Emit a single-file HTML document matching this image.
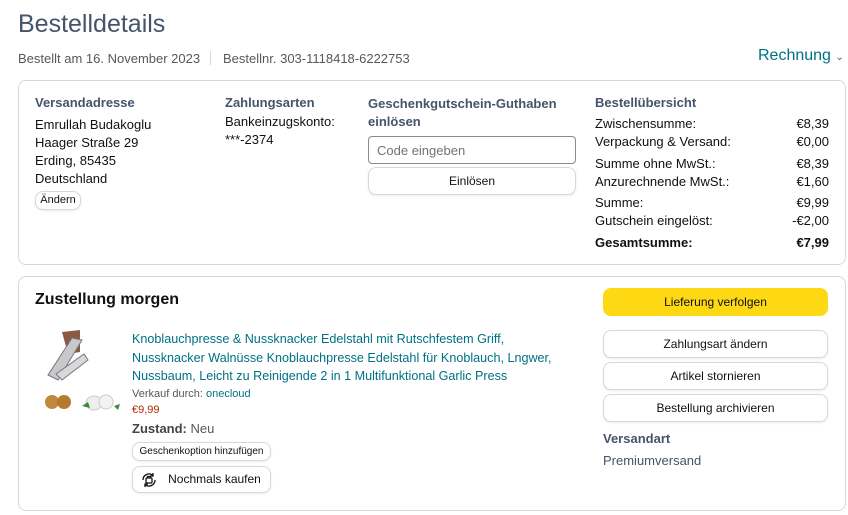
<!DOCTYPE html>
<html><head><meta charset="utf-8"><style>
*{box-sizing:border-box;margin:0;padding:0}
body{width:848px;height:515px;background:#fff;font-family:"Liberation Sans",sans-serif;color:#0f1111;font-size:13px;position:relative;overflow:hidden}
.a{position:absolute;white-space:nowrap}
.h{color:#44546a;font-weight:bold}
.box{position:absolute;border:1px solid #d5d9d9;border-radius:8px}
.btn{position:absolute;border:1px solid #d5d9d9;border-radius:8px;background:#fff;text-align:center;box-shadow:0 1px 2px rgba(213,217,217,.5)}
.row{position:absolute;left:595px;width:234px;display:flex;justify-content:space-between;font-size:13px}
.link{color:#007185}
</style></head><body>
<div class="a" style="left:18px;top:10px;font-size:25px;color:#44546a">Bestelldetails</div>
<div class="a" style="left:18px;top:51px;font-size:13px;color:#565959">Bestellt am 16. November 2023</div>
<div class="a" style="left:210px;top:51px;width:1px;height:14px;background:#d5d9d9"></div>
<div class="a" style="left:223px;top:51px;font-size:13px;color:#565959">Bestellnr. 303-1118418-6222753</div>
<div class="a" style="left:758px;top:47px;font-size:16px;color:#007185">Rechnung <span style="font-size:10px;color:#565959">&#8964;</span></div>

<div class="box" style="left:18px;top:80px;width:828px;height:185px"></div>
<div class="a h" style="left:35px;top:95px">Versandadresse</div>
<div class="a" style="left:35px;top:116px;line-height:18px">Emrullah Budakoglu<br>Haager Straße 29<br>Erding, 85435<br>Deutschland</div>
<div class="btn" style="left:35px;top:191px;width:46px;height:19px;font-size:11px;line-height:17px">Ändern</div>
<div class="a h" style="left:225px;top:95px">Zahlungsarten</div>
<div class="a" style="left:225px;top:113px;line-height:18px">Bankeinzugskonto:<br>***-2374</div>
<div class="a h" style="left:368px;top:95px;line-height:18px">Geschenkgutschein-Guthaben<br>einlösen</div>
<div class="a" style="left:368px;top:136px;width:208px;height:28px;border:1px solid #888c8c;border-radius:4px;padding:6px 8px;color:#6f7373">Code eingeben</div>
<div class="btn" style="left:368px;top:167px;width:208px;height:28px;line-height:26px;font-size:12px">Einlösen</div>
<div class="a h" style="left:595px;top:95px">Bestellübersicht</div>
<div class="row" style="top:116px"><span>Zwischensumme:</span><span>€8,39</span></div>
<div class="row" style="top:134px"><span>Verpackung &amp; Versand:</span><span>€0,00</span></div>
<div class="row" style="top:156px"><span>Summe ohne MwSt.:</span><span>€8,39</span></div>
<div class="row" style="top:174px"><span>Anzurechnende MwSt.:</span><span>€1,60</span></div>
<div class="row" style="top:195px"><span>Summe:</span><span>€9,99</span></div>
<div class="row" style="top:213px"><span>Gutschein eingelöst:</span><span>-€2,00</span></div>
<div class="row" style="top:235px;font-weight:bold"><span>Gesamtsumme:</span><span>€7,99</span></div>

<div class="box" style="left:18px;top:276px;width:828px;height:235px"></div>
<div class="a" style="left:35px;top:291px;font-size:16px;font-weight:bold">Zustellung morgen</div>
<div class="a" style="left:42px;top:330px;width:80px;height:82px">
<svg width="80" height="82" viewBox="0 0 80 82">
<path d="M20 2 L38 0 L38 22 L26 24 Z" fill="#8a5a45"/>
<path d="M6 45 L30 8 L40 10 L16 50 Z" fill="#c8c8cc" stroke="#777" stroke-width="1"/>
<path d="M14 44 L42 24 L46 30 L20 50 Z" fill="#d8d8dc" stroke="#777" stroke-width="1"/>
<circle cx="10" cy="72" r="7" fill="#c08a3e"/><circle cx="22" cy="72" r="7" fill="#b57a30"/>
<ellipse cx="52" cy="73" rx="8" ry="7" fill="#eee" stroke="#ccc"/><ellipse cx="64" cy="72" rx="7" ry="7" fill="#f2f2f2" stroke="#ccc"/>
<path d="M40 76 l6 -4 l2 6 z M72 76 l6 -2 l-2 6z" fill="#3a8a3a"/>
</svg></div>
<div class="a link" style="left:132px;top:330px;line-height:18.5px;font-size:12.6px">Knoblauchpresse &amp; Nussknacker Edelstahl mit Rutschfestem Griff,<br>Nussknacker Walnüsse Knoblauchpresse Edelstahl für Knoblauch, Lngwer,<br>Nussbaum, Leicht zu Reinigende 2 in 1 Multifunktional Garlic Press</div>
<div class="a" style="left:132px;top:388px;font-size:11px;color:#565959">Verkauf durch: <span class="link">onecloud</span></div>
<div class="a" style="left:132px;top:404px;font-size:11px;color:#b12704">€9,99</div>
<div class="a" style="left:132px;top:421px;color:#565959"><b style="color:#444">Zustand:</b> Neu</div>
<div class="btn" style="left:132px;top:442px;width:139px;height:19px;font-size:10px;line-height:17px">Geschenkoption hinzufügen</div>
<div class="btn" style="left:132px;top:466px;width:139px;height:27px;line-height:25px;font-size:12px;padding-left:26px">Nochmals kaufen
<svg style="position:absolute;left:7px;top:4px" width="18" height="18" viewBox="0 0 18 18" fill="none" stroke="#0f1111" stroke-width="1.3"><path d="M3 9a6 6 0 0 1 10-4.5M15 9a6 6 0 0 1-10 4.5"/><path d="M13 2v3h-3M5 16v-3h3"/><rect x="6" y="7" width="6" height="5" rx="1"/><path d="M7.5 7V5.5h3V7"/></svg></div>

<div class="a" style="left:603px;top:288px;width:225px;height:28px;background:#ffd814;border-radius:8px;text-align:center;line-height:28px;font-size:12px">Lieferung verfolgen</div>
<div class="btn" style="left:603px;top:330px;width:225px;height:28px;line-height:26px;font-size:12px">Zahlungsart ändern</div>
<div class="btn" style="left:603px;top:362px;width:225px;height:28px;line-height:26px;font-size:12px">Artikel stornieren</div>
<div class="btn" style="left:603px;top:394px;width:225px;height:28px;line-height:26px;font-size:12px">Bestellung archivieren</div>
<div class="a h" style="left:603px;top:431px">Versandart</div>
<div class="a" style="left:603px;top:453px;color:#44546a">Premiumversand</div>
</body></html>
